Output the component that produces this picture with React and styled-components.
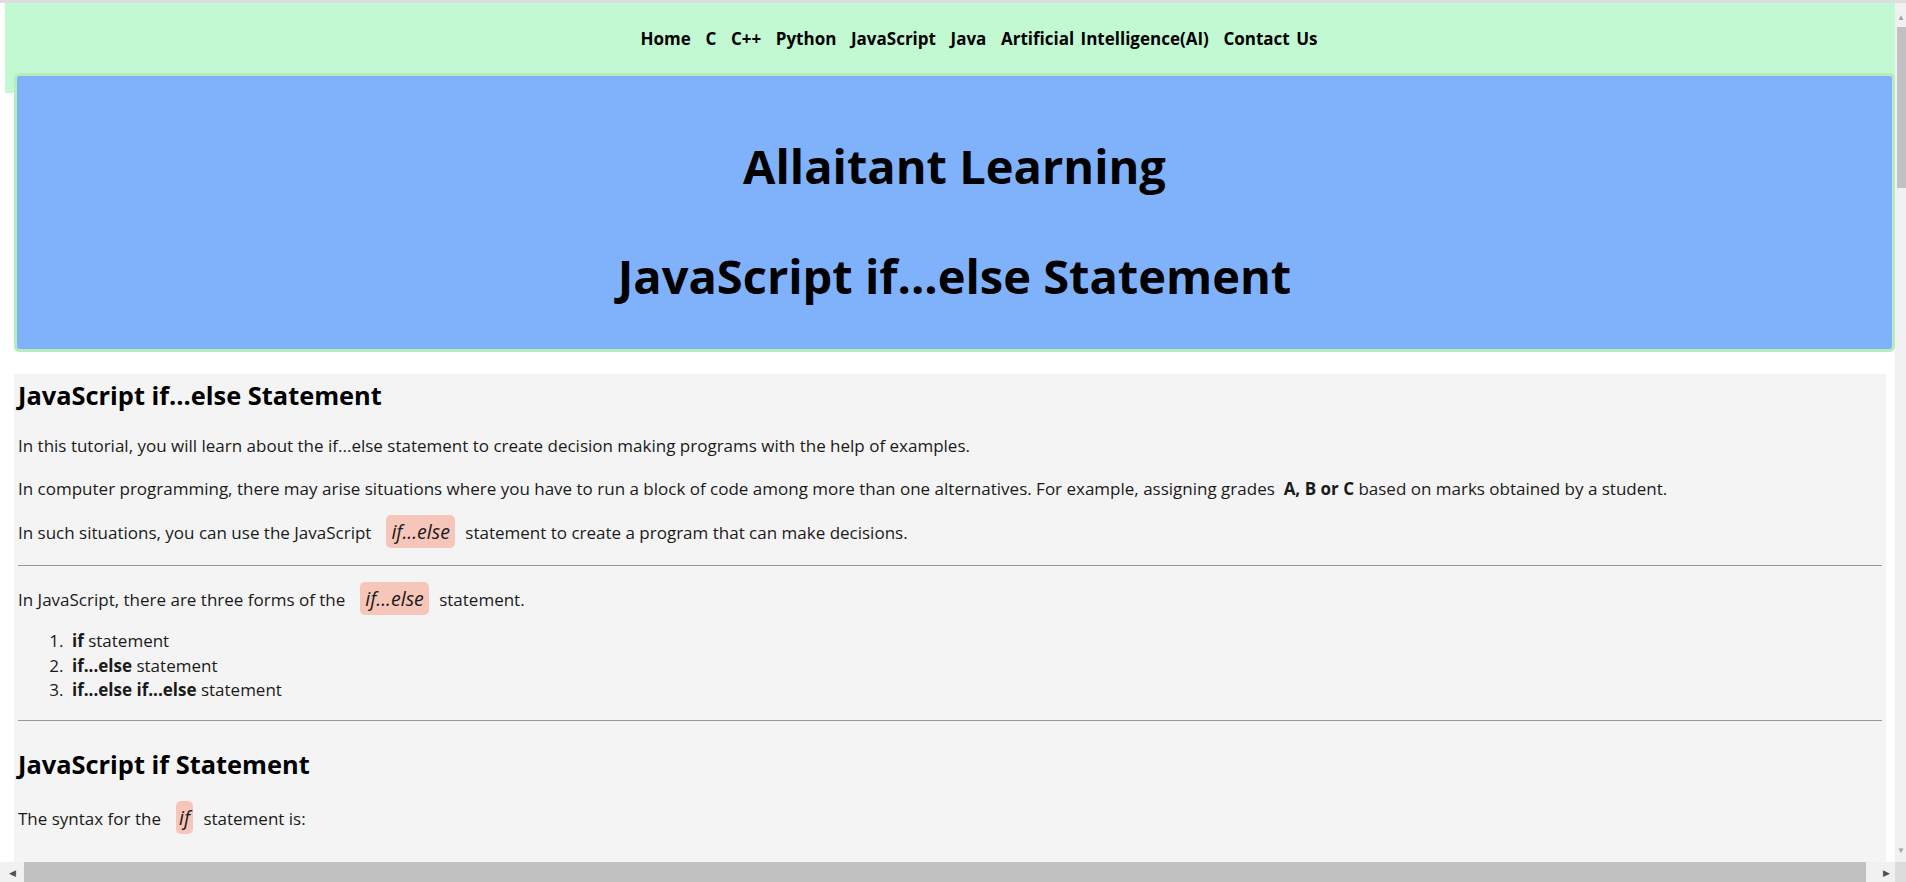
import React from "react";
import styled, { createGlobalStyle } from "styled-components";

const Global = createGlobalStyle`
  html, body { margin: 0; padding: 0; overflow: hidden; background: #ffffff; }
  #root { width: 1906px; height: 882px; }
  * { box-sizing: border-box; }
`;

const FONT = `"Open Sans", "Noto Sans", Arial, sans-serif`;

const Frame = styled.div`
  width: 1906px;
  height: 882px;
  display: flex;
  flex-direction: column;
  font-family: ${FONT};
  color: #111;
`;

const TopEdge = styled.div`
  height: 3px;
  flex: none;
  background: #dedede;
`;

const Middle = styled.div`
  flex: 1;
  min-height: 0;
  display: flex;
`;

const Viewport = styled.div`
  flex: 1;
  min-width: 0;
  overflow: hidden;
  background: #ffffff;
`;

const Nav = styled.nav`
  height: 90px;
  margin-left: 5px;
  background: #c2f9d3;
  display: flex;
  justify-content: center;
  align-items: flex-start;
  padding-top: 26px;
  padding-left: 58px;
  gap: 14.6px;
`;

const NavLink = styled.a`
  font-size: 17px;
  font-weight: 700;
  color: #000;
  text-decoration: none;
  line-height: 20px;
  white-space: nowrap;
  word-spacing: 2px;
`;

const Hero = styled.header`
  margin: -20px 0 0 14px;
  height: 279px;
  border: 3px solid #b9ecbb;
  border-radius: 5px;
  background: #80b2fb;
  display: flex;
  flex-direction: column;
  align-items: center;
  padding-top: 60px;
`;

const HeroTitle = styled.h1`
  margin: 0;
  font-size: 47px;
  line-height: 60px;
  font-weight: 700;
  color: #000;
  white-space: nowrap;
  & + & { margin-top: 50px; }
`;

const Article = styled.main`
  margin: 22px 9px 0 14px;
  background: #f4f4f4;
  padding: 4px 4px 80px 4px;
`;

const H2 = styled.h2`
  margin: ${(p) => p.$m || "0"};
  font-size: 25.4px;
  font-weight: 700;
  line-height: 34px;
  color: #000;
`;

const P = styled.p`
  margin: ${(p) => p.$m || "0"};
  font-size: 17px;
  line-height: 24px;
  color: #1a1a1a;
`;

const Code = styled.code`
  font-family: ${FONT};
  font-style: italic;
  font-size: 19.5px;
  background: #f5c6b9;
  border-radius: 5px;
  padding: 3px ${(p) => (p.$tight ? "3px" : "5px")};
  margin: 0 6px 0 15px;
`;

const Rule = styled.hr`
  margin: ${(p) => p.$m || "0"};
  border: 0;
  border-top: 1px solid #9a9a9a;
  height: 0;
`;

const List = styled.ol`
  margin: 17px 0 0 0;
  padding-left: 54px;
  font-size: 17px;
  line-height: 24.6px;
  color: #1a1a1a;

  & > li::marker {
    content: counter(list-item) ".\\2002";
  }
`;

const VScroll = styled.div`
  width: 11px;
  flex: none;
  background: #f1f1f1;
  display: flex;
  flex-direction: column;
  align-items: flex-end;
`;

const VArrow = styled.div`
  height: 24px;
  width: 9px;
  display: flex;
  align-items: center;
  justify-content: flex-start;
  color: #a3a3a3;
  font-size: 8px;
  line-height: 1;
  padding-top: ${(p) => (p.$down ? "0" : "4px")};
`;

const VThumb = styled.div`
  width: 9px;
  height: 161px;
  background: #c1c1c1;
`;

const VFill = styled.div`
  flex: 1;
`;

const HScroll = styled.div`
  height: 20px;
  flex: none;
  display: flex;
  background: #f1f1f1;
`;

const HArrow = styled.div`
  width: ${(p) => p.$w}px;
  flex: none;
  display: flex;
  align-items: center;
  justify-content: center;
  color: #505050;
  font-size: 9px;
`;

const HThumb = styled.div`
  width: 1842px;
  flex: none;
  background: #c1c1c1;
`;

const HTrack = styled.div`
  flex: 1;
`;

const Corner = styled.div`
  width: 11px;
  flex: none;
  background: #dcdcdc;
`;

const navItems = [
  "Home",
  "C",
  "C++",
  "Python",
  "JavaScript",
  "Java",
  "Artificial Intelligence(AI)",
  "Contact Us",
];

export default function App() {
  return (
    <>
      <Global />
      <Frame>
        <TopEdge />
        <Middle>
          <Viewport>
            <Nav>
              {navItems.map((n) => (
                <NavLink key={n} href="#">
                  {n}
                </NavLink>
              ))}
            </Nav>
            <Hero>
              <HeroTitle>Allaitant Learning</HeroTitle>
              <HeroTitle>JavaScript if...else Statement</HeroTitle>
            </Hero>
            <Article>
              <H2>JavaScript if...else Statement</H2>
              <P $m="22px 0 0 0">
                In this tutorial, you will learn about the if...else statement to create decision making programs with the help of examples.
              </P>
              <P $m="19px 0 0 0">
                In computer programming, there may arise situations where you have to run a block of code among more than one alternatives. For example, assigning grades{" "}
                <b>&nbsp;A, B or C</b> based on marks obtained by a student.
              </P>
              <P $m="19px 0 0 0">
                In such situations, you can use the JavaScript<Code>if...else</Code> statement to create a program that can make decisions.
              </P>
              <Rule $m="20px 0 0 0" />
              <P $m="21px 0 0 0">
                In JavaScript, there are three forms of the<Code>if...else</Code> statement.
              </P>
              <List>
                <li>
                  <b>if</b> statement
                </li>
                <li>
                  <b>if...else</b> statement
                </li>
                <li>
                  <b>if...else if...else</b> statement
                </li>
              </List>
              <Rule $m="17px 0 0 0" />
              <H2 $m="26px 0 0 0">JavaScript if Statement</H2>
              <P $m="25px 0 0 0">
                The syntax for the<Code $tight>if</Code> statement is:
              </P>
            </Article>
          </Viewport>
          <VScroll>
            <VArrow>▲</VArrow>
            <VThumb />
            <VFill />
            <VArrow $down>▼</VArrow>
          </VScroll>
        </Middle>
        <HScroll>
          <HArrow $w={24}>◀</HArrow>
          <HThumb />
          <HTrack />
          <HArrow $w={17}>▶</HArrow>
          <Corner />
        </HScroll>
      </Frame>
    </>
  );
}
